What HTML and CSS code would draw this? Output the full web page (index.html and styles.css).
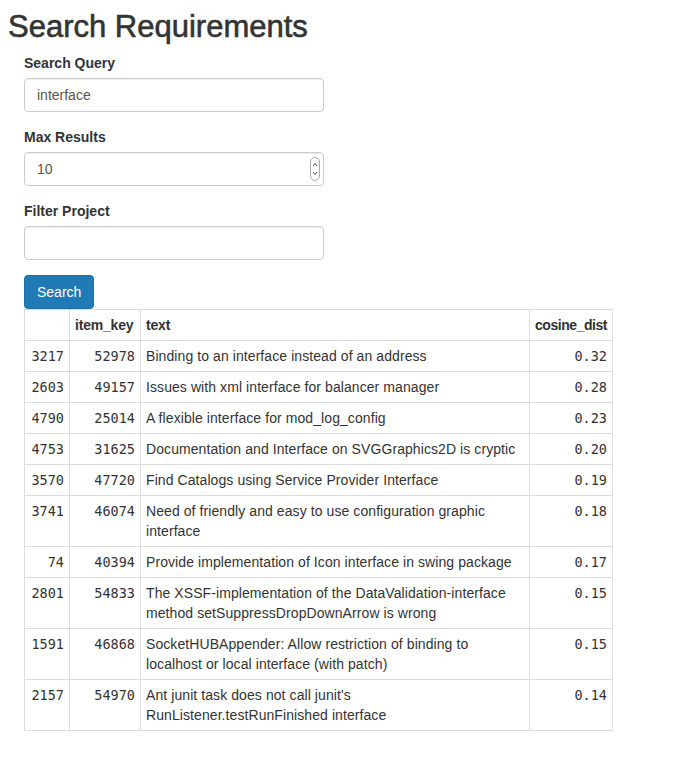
FILE: index.html
```html
<!DOCTYPE html>
<html>
<head>
<meta charset="utf-8">
<title>Search Requirements</title>
<link rel="stylesheet" href="styles.css">
</head>
<body>
<h1 class="title">Search Requirements</h1>
<div class="panel">
  <div class="form-group">
    <label class="label">Search Query</label>
    <div class="input">interface</div>
  </div>
  <div class="form-group">
    <label class="label">Max Results</label>
    <div class="input number">10
      <svg class="spinner" width="10" height="24" viewBox="0 0 10 24">
        <rect x="0.5" y="0.5" width="9" height="23" rx="4.5" ry="4.5" fill="#fff" stroke="#a9a9a9"/>
        <path d="M3 9 L5 6.5 L7 9" fill="none" stroke="#555" stroke-width="1"/>
        <path d="M3 15 L5 17.5 L7 15" fill="none" stroke="#555" stroke-width="1"/>
      </svg>
    </div>
  </div>
  <div class="form-group">
    <label class="label">Filter Project</label>
    <div class="input"></div>
  </div>
  <button class="btn">Search</button>
  <table class="results">
    <colgroup>
      <col class="c-idx"><col class="c-key"><col class="c-text"><col class="c-dist">
    </colgroup>
    <thead>
      <tr><th></th><th>item_key</th><th>text</th><th class="num-h">cosine_dist</th></tr>
    </thead>
    <tbody>
      <tr><td class="mono">3217</td><td class="mono">52978</td><td>Binding to an interface instead of an address</td><td class="mono">0.32</td></tr>
      <tr><td class="mono">2603</td><td class="mono">49157</td><td>Issues with xml interface for balancer manager</td><td class="mono">0.28</td></tr>
      <tr><td class="mono">4790</td><td class="mono">25014</td><td>A flexible interface for mod_log_config</td><td class="mono">0.23</td></tr>
      <tr><td class="mono">4753</td><td class="mono">31625</td><td>Documentation and Interface on SVGGraphics2D is cryptic</td><td class="mono">0.20</td></tr>
      <tr><td class="mono">3570</td><td class="mono">47720</td><td>Find Catalogs using Service Provider Interface</td><td class="mono">0.19</td></tr>
      <tr><td class="mono">3741</td><td class="mono">46074</td><td>Need of friendly and easy to use configuration graphic interface</td><td class="mono">0.18</td></tr>
      <tr><td class="mono">74</td><td class="mono">40394</td><td>Provide implementation of Icon interface in swing package</td><td class="mono">0.17</td></tr>
      <tr><td class="mono">2801</td><td class="mono">54833</td><td>The XSSF-implementation of the DataValidation-interface method setSuppressDropDownArrow is wrong</td><td class="mono">0.15</td></tr>
      <tr><td class="mono">1591</td><td class="mono">46868</td><td>SocketHUBAppender: Allow restriction of binding to localhost or local interface (with patch)</td><td class="mono">0.15</td></tr>
      <tr><td class="mono">2157</td><td class="mono">54970</td><td>Ant junit task does not call junit's RunListener.testRunFinished interface</td><td class="mono">0.14</td></tr>
    </tbody>
  </table>
</div>
</body>
</html>
```

FILE: styles.css
```css
* { box-sizing: border-box; }
html, body { margin: 0; padding: 0; background: #fff; }
body {
  padding: 10px 8px 40px 8px;
  font-family: "Liberation Sans", Arial, Helvetica, sans-serif;
  font-size: 14px;
  line-height: 20px;
  color: #333;
}
.title {
  margin: 0 0 10px 0;
  font-size: 31px;
  line-height: 33px;
  font-weight: 400;
  -webkit-text-stroke: 0.6px #333;
  color: #333;
}
.panel {
  padding-left: 16px;
}
.form-group {
  margin-bottom: 15px;
}
.label {
  display: block;
  font-weight: bold;
  margin-bottom: 5px;
  line-height: 20px;
}
.input {
  position: relative;
  width: 300px;
  height: 34px;
  padding: 6px 12px;
  border: 1px solid #ccc;
  border-radius: 4px;
  color: #555;
  background: #fff;
  line-height: 20px;
  box-shadow: inset 0 1px 1px rgba(0,0,0,0.075);
}
.spinner {
  position: absolute;
  right: 3px;
  top: 4px;
}
.btn {
  display: block;
  height: 34px;
  padding: 6px 12px;
  font-family: inherit;
  font-size: 14px;
  line-height: 20px;
  color: #fff;
  background: #1f7ab6;
  border: 1px solid #1b6ea6;
  border-radius: 4px;
}
.results {
  border-collapse: collapse;
  table-layout: fixed;
  width: 588px;
  border: 1px solid #ddd;
}
.c-idx { width: 45px; }
.c-key { width: 71px; }
.c-text { width: 389px; }
.c-dist { width: 83px; }
.results th, .results td {
  padding: 5px;
  border: 1px solid #ddd;
  vertical-align: top;
  line-height: 20px;
  text-align: left;
  letter-spacing: 0.08px;
}
.results th { font-weight: bold; letter-spacing: -0.2px; }
.results th.num-h { text-align: right; letter-spacing: -0.45px; }
.results td.mono {
  text-align: right;
  font-family: "DejaVu Sans Mono", "Liberation Mono", monospace;
  font-size: 13.5px;
  letter-spacing: 0;
}
```
